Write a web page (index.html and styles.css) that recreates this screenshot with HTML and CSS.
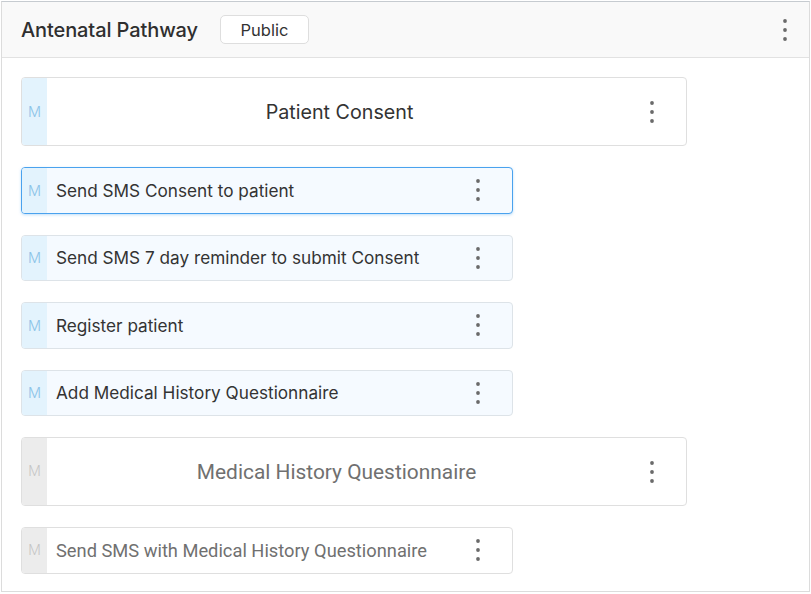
FILE: index.html
```html
<!DOCTYPE html>
<html lang="en">
<head>
<meta charset="utf-8">
<title>Antenatal Pathway</title>
<link rel="stylesheet" href="styles.css">
</head>
<body>
<div class="panel">
  <div class="panel-header">
    <span class="panel-title">Antenatal Pathway</span>
    <span class="badge">Public</span>
    <span class="spacer"></span>
    <span class="kebab header-kebab"><svg width="6" height="22" viewBox="0 0 6 22"><circle cx="3" cy="2" r="1.9"/><circle cx="3" cy="11" r="1.9"/><circle cx="3" cy="20" r="1.9"/></svg></span>
  </div>
  <div class="panel-body">
    <div class="card big">
      <div class="strip">M</div>
      <div class="big-title">Patient Consent</div>
      <span class="kebab"><svg width="6" height="22" viewBox="0 0 6 22"><circle cx="3" cy="2" r="1.9"/><circle cx="3" cy="11" r="1.9"/><circle cx="3" cy="20" r="1.9"/></svg></span>
    </div>
    <div class="card small active selected">
      <div class="strip">M</div>
      <div class="label">Send SMS Consent to patient</div>
      <span class="kebab"><svg width="6" height="22" viewBox="0 0 6 22"><circle cx="3" cy="2" r="1.9"/><circle cx="3" cy="11" r="1.9"/><circle cx="3" cy="20" r="1.9"/></svg></span>
    </div>
    <div class="card small active">
      <div class="strip">M</div>
      <div class="label">Send SMS 7 day reminder to submit Consent</div>
      <span class="kebab"><svg width="6" height="22" viewBox="0 0 6 22"><circle cx="3" cy="2" r="1.9"/><circle cx="3" cy="11" r="1.9"/><circle cx="3" cy="20" r="1.9"/></svg></span>
    </div>
    <div class="card small active">
      <div class="strip">M</div>
      <div class="label">Register patient</div>
      <span class="kebab"><svg width="6" height="22" viewBox="0 0 6 22"><circle cx="3" cy="2" r="1.9"/><circle cx="3" cy="11" r="1.9"/><circle cx="3" cy="20" r="1.9"/></svg></span>
    </div>
    <div class="card small active">
      <div class="strip">M</div>
      <div class="label">Add Medical History Questionnaire</div>
      <span class="kebab"><svg width="6" height="22" viewBox="0 0 6 22"><circle cx="3" cy="2" r="1.9"/><circle cx="3" cy="11" r="1.9"/><circle cx="3" cy="20" r="1.9"/></svg></span>
    </div>
    <div class="card big muted">
      <div class="strip">M</div>
      <div class="big-title">Medical History Questionnaire</div>
      <span class="kebab"><svg width="6" height="22" viewBox="0 0 6 22"><circle cx="3" cy="2" r="1.9"/><circle cx="3" cy="11" r="1.9"/><circle cx="3" cy="20" r="1.9"/></svg></span>
    </div>
    <div class="card small muted">
      <div class="strip">M</div>
      <div class="label">Send SMS with Medical History Questionnaire</div>
      <span class="kebab"><svg width="6" height="22" viewBox="0 0 6 22"><circle cx="3" cy="2" r="1.9"/><circle cx="3" cy="11" r="1.9"/><circle cx="3" cy="20" r="1.9"/></svg></span>
    </div>
  </div>
</div>
</body>
</html>
```
FILE: styles.css
```css
* { box-sizing: border-box; }
html, body { margin: 0; padding: 0; background: #ffffff; }
body {
  font-family: Inter, "Noto Sans", sans-serif;
  color: #333333;
  padding: 1px 1px 0 1px;
}
.panel {
  width: 809px;
  height: 591px;
  border: 1px solid #dcdcdc;
  border-top-color: #c6cbd0;
  background: #ffffff;
}
.panel-header {
  height: 56px;
  background: #f9f9f9;
  border-bottom: 1px solid #e2e2e2;
  display: flex;
  align-items: center;
  padding: 0 0 0 19px;
}
.panel-title {
  font-size: 20px;
  font-weight: 500;
  color: #2f2f2f;
  letter-spacing: -0.1px;
}
.badge {
  margin-left: 22px;
  width: 89px;
  height: 29px;
  border: 1px solid #dedede;
  border-radius: 5px;
  background: #ffffff;
  display: flex;
  align-items: center;
  justify-content: center;
  font-size: 16.5px;
  color: #333333;
}
.spacer { flex: 1; }
.kebab {
  display: flex;
  align-items: center;
  justify-content: center;
  width: 40px;
  flex: none;
}
.kebab svg { fill: #6a6a6a; }
.header-kebab { margin-right: 4px; }
.panel-body {
  padding: 19px 0 0 19px;
  display: flex;
  flex-direction: column;
  align-items: flex-start;
}
.card {
  display: flex;
  align-items: stretch;
  border: 1px solid #dfdfdf;
  border-radius: 4px;
  background: #ffffff;
  overflow: hidden;
}
.card .kebab { margin-right: 14px; }
.strip {
  width: 25px;
  flex: none;
  background: #e3f3fd;
  color: #8cc3e8;
  font-size: 14.5px;
  font-weight: 300;
  display: flex;
  align-items: center;
  justify-content: center;
}
.big {
  width: 666px;
  height: 69px;
  margin-bottom: 21px;
}
.big-title {
  flex: 1;
  display: flex;
  align-items: center;
  justify-content: center;
  font-size: 19.7px;
  color: #333333;
}
.small {
  width: 492px;
  height: 46.5px;
  margin-bottom: 21px;
}
.label {
  flex: 1;
  display: flex;
  align-items: center;
  padding-left: 9px;
  font-size: 17.2px;
  color: #333333;
}
.active {
  background: #f5faff;
  border-color: #dde3e8;
}
.selected {
  border-color: #4aa2ee;
  box-shadow: 0 1px 3px rgba(74, 162, 238, 0.35);
}
.muted .strip {
  background: #ececec;
  color: #c4c4c4;
  font-family: Roboto, sans-serif;
}
.muted .big-title {
  font-family: Roboto, "Liberation Sans", sans-serif;
  color: #707070;
  font-size: 20.9px;
  font-weight: 400;
  padding-right: 6px;
}
.muted .label {
  font-family: Roboto, "Liberation Sans", sans-serif;
  color: #707070;
  font-size: 18.3px;
}
```
